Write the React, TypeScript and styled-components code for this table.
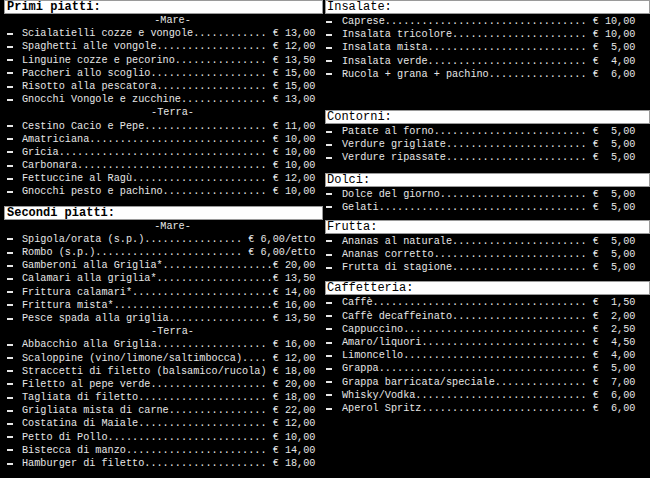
import {FC} from "react"
import styled, {createGlobalStyle} from "styled-components"

// one menu line is always 48 monospace cells wide: name, dot leader, price
const LINE = 48

interface Dish {
    name: string
    price: string
    tight?: boolean
}

interface Group {
    label?: string
    dishes: Dish[]
}

interface Section {
    title: string
    groups: Group[]
    gap: number
}

const euro = (v: string) => "€ " + v.padStart(5, " ")

const leader = (d: Dish) => {
    const tail = d.tight ? d.price : " " + d.price
    const dots = Math.max(0, LINE - d.name.length - tail.length)
    return d.name + ".".repeat(dots) + tail
}

const left: Section[] = [
    {
        title: "Primi piatti:",
        gap: 0,
        groups: [
            {
                label: "-Mare-",
                dishes: [
                    {name: "Scialatielli cozze e vongole", price: euro("13,00")},
                    {name: "Spaghetti alle vongole", price: euro("12,00")},
                    {name: "Linguine cozze e pecorino", price: euro("13,50")},
                    {name: "Paccheri allo scoglio", price: euro("15,00")},
                    {name: "Risotto alla pescatora", price: euro("15,00")},
                    {name: "Gnocchi Vongole e zucchine", price: euro("13,00")},
                ],
            },
            {
                label: "-Terra-",
                dishes: [
                    {name: "Cestino Cacio e Pepe", price: euro("11,00")},
                    {name: "Amatriciana", price: euro("10,00")},
                    {name: "Gricia", price: euro("10,00")},
                    {name: "Carbonara", price: euro("10,00")},
                    {name: "Fettuccine al Ragù", price: euro("12,00")},
                    {name: "Gnocchi pesto e pachino", price: euro("10,00")},
                ],
            },
        ],
    },
    {
        title: "Secondi piatti:",
        gap: 7,
        groups: [
            {
                label: "-Mare-",
                dishes: [
                    {name: "Spigola/orata (s.p.)", price: "€ 6,00/etto"},
                    {name: "Rombo (s.p.)", price: "€ 6,00/etto"},
                    {name: "Gamberoni alla Griglia*", price: euro("20,00"), tight: true},
                    {name: "Calamari alla griglia*", price: euro("13,50"), tight: true},
                    {name: "Frittura calamari*", price: euro("14,00"), tight: true},
                    {name: "Frittura mista*", price: euro("16,00"), tight: true},
                    {name: "Pesce spada alla griglia", price: euro("13,50")},
                ],
            },
            {
                label: "-Terra-",
                dishes: [
                    {name: "Abbacchio alla Griglia", price: euro("16,00")},
                    {name: "Scaloppine (vino/limone/saltimbocca)", price: euro("12,00")},
                    {name: "Straccetti di filetto (balsamico/rucola)", price: euro("18,00")},
                    {name: "Filetto al pepe verde", price: euro("20,00")},
                    {name: "Tagliata di filetto", price: euro("18,00")},
                    {name: "Grigliata mista di carne", price: euro("22,00")},
                    {name: "Costatina di Maiale", price: euro("12,00")},
                    {name: "Petto di Pollo", price: euro("10,00")},
                    {name: "Bistecca di manzo", price: euro("14,00")},
                    {name: "Hamburger di filetto", price: euro("18,00")},
                ],
            },
        ],
    },
]

const right: Section[] = [
    {
        title: "Insalate:",
        gap: 0,
        groups: [{
            dishes: [
                {name: "Caprese", price: euro("10,00")},
                {name: "Insalata tricolore", price: euro("10,00")},
                {name: "Insalata mista", price: euro("5,00")},
                {name: "Insalata verde", price: euro("4,00")},
                {name: "Rucola + grana + pachino", price: euro("6,00")},
            ],
        }],
    },
    {
        title: "Contorni:",
        gap: 29,
        groups: [{
            dishes: [
                {name: "Patate al forno", price: euro("5,00")},
                {name: "Verdure grigliate", price: euro("5,00")},
                {name: "Verdure ripassate", price: euro("5,00")},
            ],
        }],
    },
    {
        title: "Dolci:",
        gap: 8,
        groups: [{
            dishes: [
                {name: "Dolce del giorno", price: euro("5,00")},
                {name: "Gelati", price: euro("5,00")},
            ],
        }],
    },
    {
        title: "Frutta:",
        gap: 6,
        groups: [{
            dishes: [
                {name: "Ananas al naturale", price: euro("5,00")},
                {name: "Ananas corretto", price: euro("5,00")},
                {name: "Frutta di stagione", price: euro("5,00")},
            ],
        }],
    },
    {
        title: "Caffetteria:",
        gap: 7,
        groups: [{
            dishes: [
                {name: "Caffè", price: euro("1,50")},
                {name: "Caffè decaffeinato", price: euro("2,00")},
                {name: "Cappuccino", price: euro("2,50")},
                {name: "Amaro/liquori", price: euro("4,50")},
                {name: "Limoncello", price: euro("4,00")},
                {name: "Grappa", price: euro("5,00")},
                {name: "Grappa barricata/speciale", price: euro("7,00")},
                {name: "Whisky/Vodka", price: euro("6,00")},
                {name: "Aperol Spritz", price: euro("6,00")},
            ],
        }],
    },
]

interface ColumnProps {
    sections: Section[]
    bold: boolean
    bulletAt: number
    textAt: number
}

const MenuColumn: FC<ColumnProps> = ({sections, bold, bulletAt, textAt}) => {
    return <Column>
        {sections.map(s => (
            <Block key={s.title} $gap={s.gap}>
                <Header $bold={bold} $pad={bold ? 2 : 1}>{s.title}</Header>
                <Items $top={bold ? 0 : 1}>
                    {s.groups.map((g, gi) => (
                        <div key={gi}>
                            {g.label && <SubTitle $indent={textAt}>{g.label}</SubTitle>}
                            {g.dishes.map(d => (
                                <Row key={d.name} $bulletAt={bulletAt} $textAt={textAt}>
                                    <Bullet/>
                                    <Line>{leader(d)}</Line>
                                </Row>
                            ))}
                        </div>
                    ))}
                </Items>
            </Block>
        ))}
    </Column>
}

const App: FC = () => {
    return <>
        <GlobalStyle/>
        <Page>
            <MenuColumn sections={left} bold={true} bulletAt={3} textAt={18}/>
            <MenuColumn sections={right} bold={false} bulletAt={1} textAt={17}/>
        </Page>
    </>
}

const GlobalStyle = createGlobalStyle`
    html, body {
        margin: 0;
        padding: 0;
        background: #000;
    }

    body {
        width: 650px;
        height: 478px;
        overflow: hidden;
        font-family: "Liberation Mono", "Courier New", monospace;
    }
`

const Page = styled.div`
    display: grid;
    grid-template-columns: 319px 325px;
    column-gap: 2px;
    padding-left: 4px;
    height: 478px;
    overflow: hidden;
    background: #000;
`

const Column = styled.div`
    display: flex;
    flex-direction: column;
    min-width: 0;
`

const Block = styled.section<{ $gap: number }>`
    margin-top: ${props => props.$gap}px;
`

const Header = styled.div<{ $bold: boolean, $pad: number }>`
    height: 14px;
    box-sizing: border-box;
    padding-left: ${props => props.$pad}px;
    background: #fff;
    border: 1px solid #9a9a9a;
    color: #000;
    font-size: 12px;
    line-height: 12px;
    font-weight: ${props => props.$bold ? "bold" : "normal"};
    white-space: pre;
`

const Items = styled.div<{ $top: number }>`
    padding-top: ${props => props.$top}px;
`

const SubTitle = styled.div<{ $indent: number }>`
    height: 13.2px;
    padding-left: ${props => props.$indent}px;
    text-align: center;
    color: #e6e6e6;
    font-size: 10.2px;
    line-height: 13.2px;
`

const Row = styled.div<{ $bulletAt: number, $textAt: number }>`
    display: grid;
    grid-template-columns: ${props => props.$textAt}px auto;
    align-items: center;
    height: 13.2px;
    padding-left: 0;

    & > span:first-child {
        margin-left: ${props => props.$bulletAt}px;
    }
`

const Bullet = styled.span`
    display: block;
    width: 6px;
    height: 2px;
    background: #e6e6e6;
`

const Line = styled.span`
    color: #e6e6e6;
    font-size: 10.2px;
    line-height: 13.2px;
    white-space: pre;
`

export default App
